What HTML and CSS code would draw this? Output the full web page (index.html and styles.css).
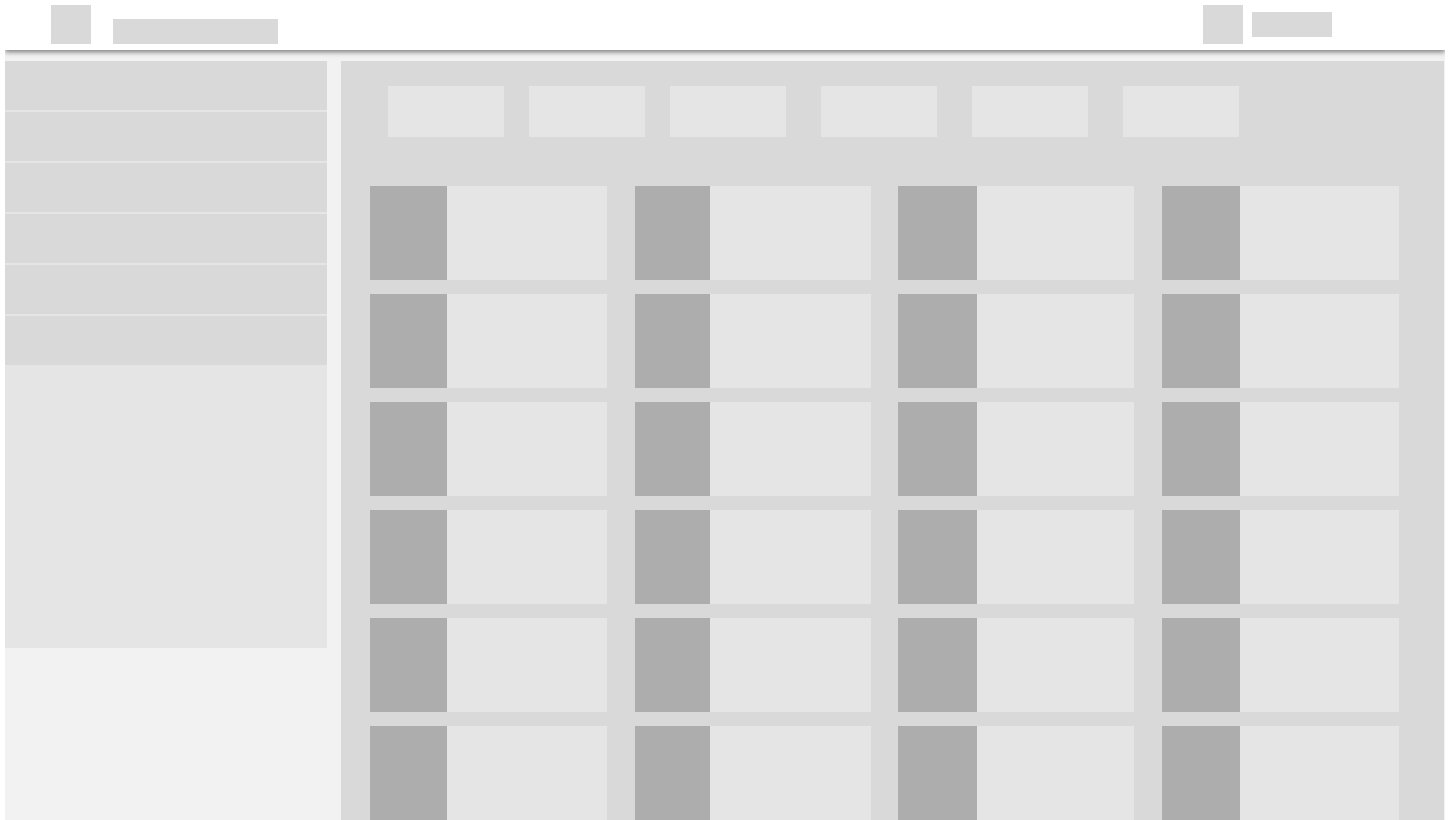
FILE: index.html
```html
<!DOCTYPE html>
<html lang="en">
<head>
<meta charset="utf-8">
<title>Dashboard</title>
<link rel="stylesheet" href="styles.css">
</head>
<body>
<div class="app">
  <header class="topbar">
    <div class="logo"></div>
    <div class="brand"></div>
    <div class="user">
      <div class="avatar"></div>
      <div class="username"></div>
    </div>
  </header>
  <div class="body">
    <nav class="sidebar">
      <div class="nav-item"></div>
      <div class="nav-item"></div>
      <div class="nav-item"></div>
      <div class="nav-item"></div>
      <div class="nav-item"></div>
      <div class="nav-item"></div>
    </nav>
    <main class="main">
      <div class="tabs">
        <div class="tab"></div>
        <div class="tab tab-near"></div>
        <div class="tab tab-near"></div>
        <div class="tab tab-far"></div>
        <div class="tab tab-far"></div>
        <div class="tab tab-far"></div>
      </div>
      <div class="grid">
        <div class="card"><div class="thumb"></div><div class="info"></div></div>
        <div class="card"><div class="thumb"></div><div class="info"></div></div>
        <div class="card"><div class="thumb"></div><div class="info"></div></div>
        <div class="card"><div class="thumb"></div><div class="info"></div></div>
        <div class="card"><div class="thumb"></div><div class="info"></div></div>
        <div class="card"><div class="thumb"></div><div class="info"></div></div>
        <div class="card"><div class="thumb"></div><div class="info"></div></div>
        <div class="card"><div class="thumb"></div><div class="info"></div></div>
        <div class="card"><div class="thumb"></div><div class="info"></div></div>
        <div class="card"><div class="thumb"></div><div class="info"></div></div>
        <div class="card"><div class="thumb"></div><div class="info"></div></div>
        <div class="card"><div class="thumb"></div><div class="info"></div></div>
        <div class="card"><div class="thumb"></div><div class="info"></div></div>
        <div class="card"><div class="thumb"></div><div class="info"></div></div>
        <div class="card"><div class="thumb"></div><div class="info"></div></div>
        <div class="card"><div class="thumb"></div><div class="info"></div></div>
        <div class="card"><div class="thumb"></div><div class="info"></div></div>
        <div class="card"><div class="thumb"></div><div class="info"></div></div>
        <div class="card"><div class="thumb"></div><div class="info"></div></div>
        <div class="card"><div class="thumb"></div><div class="info"></div></div>
        <div class="card"><div class="thumb"></div><div class="info"></div></div>
        <div class="card"><div class="thumb"></div><div class="info"></div></div>
        <div class="card"><div class="thumb"></div><div class="info"></div></div>
        <div class="card"><div class="thumb"></div><div class="info"></div></div>
      </div>
    </main>
  </div>
</div>
</body>
</html>
```

FILE: styles.css
```css
html, body {
  margin: 0;
  padding: 0;
  height: 820px;
  overflow: hidden;
  background: #ffffff;
  font-family: "Liberation Sans", Arial, sans-serif;
}

.app {
  margin: 0 5px 0 5px;
  width: 1440px;
  height: 820px;
  background: #f2f2f2;
  display: flex;
  flex-direction: column;
  overflow: hidden;
}

.topbar {
  position: relative;
  z-index: 2;
  flex: 0 0 auto;
  height: 50px;
  background: #ffffff;
  box-shadow: 0 2px 5px rgba(0, 0, 0, 0.5);
  display: flex;
  align-items: flex-start;
  padding: 0 113px 0 46px;
  box-sizing: border-box;
}

.logo {
  width: 40px;
  height: 39px;
  margin-top: 5px;
  background: #d9d9d9;
}

.brand {
  width: 165px;
  height: 25px;
  margin: 19px 0 0 22px;
  background: #d9d9d9;
}

.user {
  margin-left: auto;
  display: flex;
  align-items: flex-start;
  gap: 9px;
}

.avatar {
  width: 40px;
  height: 39px;
  margin-top: 5px;
  background: #d9d9d9;
}

.username {
  width: 80px;
  height: 25px;
  margin-top: 12px;
  background: #d9d9d9;
}

.body {
  flex: 1 1 auto;
  display: flex;
  align-items: flex-start;
  gap: 14px;
  padding-top: 11px;
  min-height: 0;
}

.sidebar {
  flex: 0 0 322px;
  height: 587px;
  background: #e5e5e5;
  display: flex;
  flex-direction: column;
  gap: 2px;
}

.nav-item {
  height: 49px;
  background: #d9d9d9;
}

.main {
  width: 1103px;
  align-self: stretch;
  background: #d9d9d9;
  padding: 25px 45px 0 29px;
  box-sizing: border-box;
}

.tabs {
  display: flex;
  padding-left: 18px;
  margin-bottom: 49px;
}

.tab {
  width: 116px;
  height: 51px;
  background: #e5e5e5;
}

.tab-near {
  margin-left: 25px;
}

.tab-far {
  margin-left: 35px;
}

.grid {
  display: grid;
  grid-template-columns: 237px 236px 236px 237px;
  column-gap: 27.67px;
  row-gap: 14px;
}

.card {
  height: 94px;
  display: flex;
  background: #e5e5e5;
}

.thumb {
  flex: 0 0 77px;
  background: #adadad;
}

.card:nth-child(4n+2) .thumb {
  flex-basis: 75px;
}

.card:nth-child(4n+3) .thumb {
  flex-basis: 79px;
}

.card:nth-child(4n+4) .thumb {
  flex-basis: 78px;
}

.info {
  flex: 1 1 auto;
}
```
